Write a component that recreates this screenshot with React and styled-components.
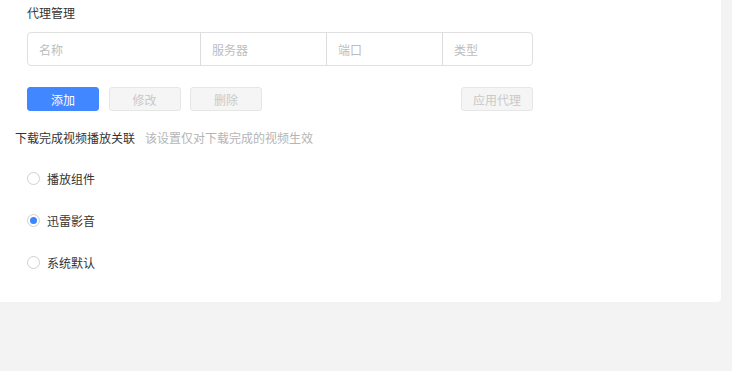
import React from "react";
import styled, { createGlobalStyle } from "styled-components";

const Global = createGlobalStyle`
  html, body { margin: 0; padding: 0; background: #f3f3f3; }
  body { font-family: "Noto Sans CJK SC", "Noto Sans", sans-serif; font-size: 12px; color: #333; }
  * { box-sizing: border-box; }
`;

const Panel = styled.div`
  width: 721px;
  height: 302px;
  background: #fff;
  border-bottom-right-radius: 4px;
  padding-top: 4px;
`;

const Title = styled.div`
  padding-left: 27px;
  font-size: 12px;
  line-height: 18px;
  color: #333;
`;

const InputGroup = styled.div`
  margin: 10px 0 0 27px;
  width: 506px;
  height: 34px;
  display: flex;
  border: 1px solid #e0e0e0;
  border-radius: 4px;
`;

const Field = styled.div`
  width: ${p => p.$w}px;
  flex: none;
  display: flex;
  align-items: center;
  padding-left: 11px;
  color: #bdbdbd;
  font-size: 12px;
  border-left: ${p => (p.$first ? "none" : "1px solid #dcdcdc")};
`;

const ButtonRow = styled.div`
  margin: 21px 0 0 27px;
  width: 506px;
  display: flex;
  gap: 9.5px;
`;

const Button = styled.div`
  width: 72px;
  height: 24px;
  border-radius: 3px;
  display: flex;
  align-items: center;
  justify-content: center;
  font-size: 12px;
  background: ${p => (p.$primary ? "#4187ff" : "#f5f5f5")};
  color: ${p => (p.$primary ? "#fff" : "#c9c9c9")};
  border: 1px solid ${p => (p.$primary ? "#4187ff" : "#e6e6e6")};
  margin-left: ${p => (p.$push ? "auto" : "0")};
`;

const Heading = styled.div`
  margin: 18px 0 0 15px;
  display: flex;
  gap: 10px;
  line-height: 18px;
  font-size: 12px;
`;

const Hint = styled.span`
  color: #b5b5b5;
`;

const RadioList = styled.div`
  margin: 22px 0 0 27px;
  display: flex;
  flex-direction: column;
  gap: 24px;
`;

const RadioRow = styled.div`
  display: flex;
  align-items: center;
  gap: 7px;
  height: 18px;
  color: #333;
`;

const Circle = styled.span`
  width: 13px;
  height: 13px;
  border-radius: 50%;
  border: 1px solid #d0d0d0;
  background: #fff;
  display: flex;
  align-items: center;
  justify-content: center;
  &::after {
    content: "";
    width: 7px;
    height: 7px;
    border-radius: 50%;
    background: ${p => (p.$on ? "#3d84ff" : "transparent")};
  }
`;

const fields = [
  { label: "名称", w: 172 },
  { label: "服务器", w: 126 },
  { label: "端口", w: 116 },
  { label: "类型", w: 90 },
];

const radios = [
  { label: "播放组件", on: false },
  { label: "迅雷影音", on: true },
  { label: "系统默认", on: false },
];

export default function App() {
  return (
    <>
      <Global />
      <Panel>
        <Title>代理管理</Title>
        <InputGroup>
          {fields.map((f, i) => (
            <Field key={f.label} $w={f.w} $first={i === 0}>
              {f.label}
            </Field>
          ))}
        </InputGroup>
        <ButtonRow>
          <Button $primary>添加</Button>
          <Button>修改</Button>
          <Button>删除</Button>
          <Button $push>应用代理</Button>
        </ButtonRow>
        <Heading>
          <span>下载完成视频播放关联</span>
          <Hint>该设置仅对下载完成的视频生效</Hint>
        </Heading>
        <RadioList>
          {radios.map(r => (
            <RadioRow key={r.label}>
              <Circle $on={r.on} />
              <span>{r.label}</span>
            </RadioRow>
          ))}
        </RadioList>
      </Panel>
    </>
  );
}
